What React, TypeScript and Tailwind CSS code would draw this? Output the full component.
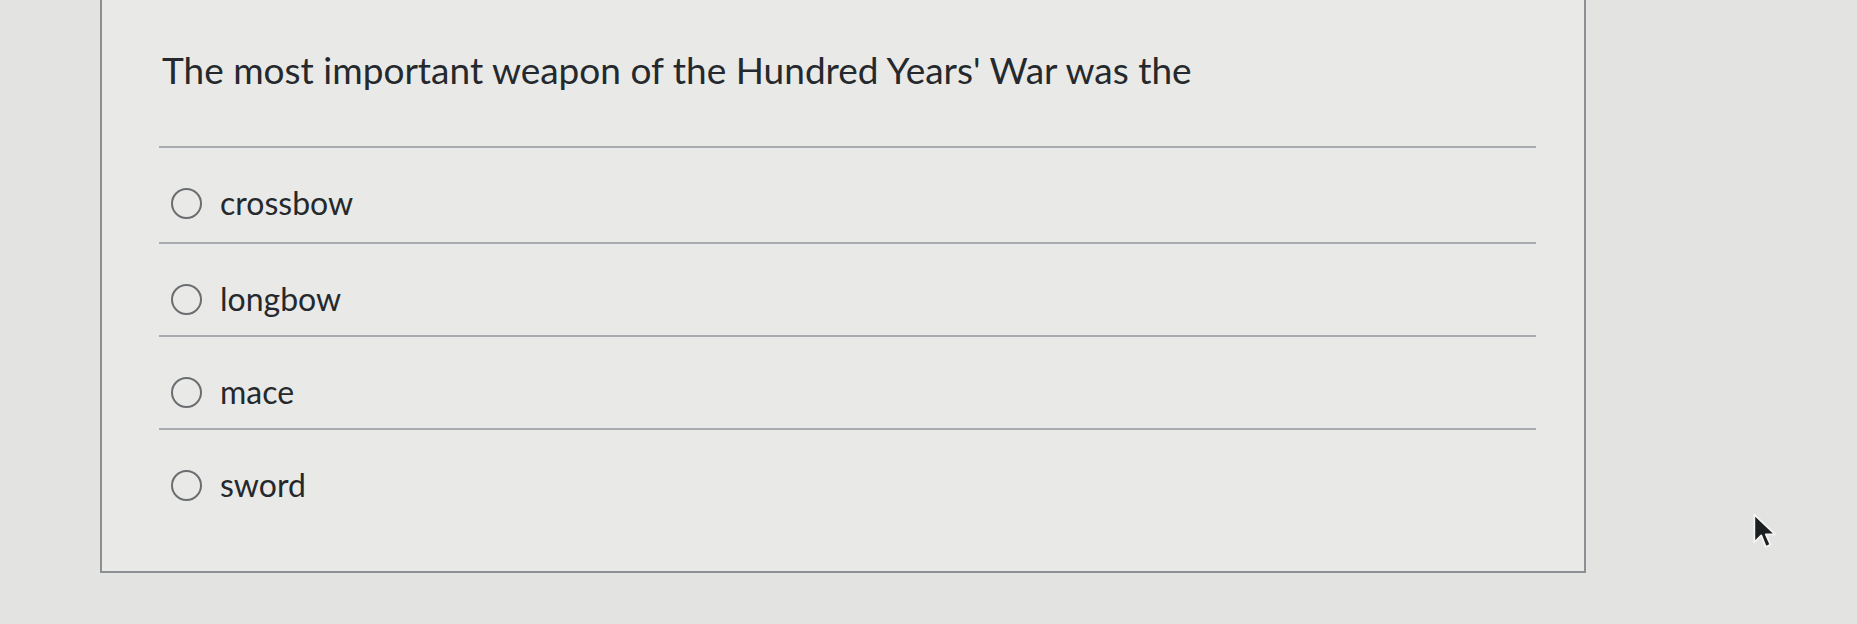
const OPTIONS = ['crossbow', 'longbow', 'mace', 'sword'];

function Radio() {
  return <span className="block h-[31px] w-[31px] shrink-0 rounded-full border-2 border-[#6a6e71]" />;
}

function Cursor() {
  return (
    <svg
      className="absolute left-[1752px] top-[512px]"
      width="30"
      height="40"
      viewBox="0 0 26 34"
    >
      <path
        d="M2 2 L2 26 L8 20 L12 30 L16 28 L12 19 L20 19 Z"
        fill="#1c1f22"
        stroke="#f4f4f4"
        strokeWidth="1.6"
        strokeLinejoin="round"
      />
    </svg>
  );
}

export default function App() {
  return (
    <div
      className="relative h-[624px] w-[1857px] overflow-hidden bg-[#e3e3e1]"
      style={{ fontFamily: 'Lato, "Open Sans", sans-serif' }}
    >
      <div className="ml-[100px] h-[573px] w-[1486px] border-x-2 border-b-2 border-[#8c9093] bg-[#e9e9e7] pl-[57px] pr-[48px]">
        <h1 className="pt-[50px] pl-[3px] text-[37px] leading-[40px] font-normal text-[#25292d]">
          The most important weapon of the Hundred Years' War was the
        </h1>

        <div className="mt-[56px]">
          {OPTIONS.map((opt, i) => (
            <div key={opt}>
              <div className="h-[2px] bg-[#a7abad]" />
              <label
                className={`flex items-center gap-[18px] pl-[12px] ${
                  i === 0 ? 'pt-[38px] pb-[22px]' : 'pt-[38px] pb-[19px]'
                }`}
              >
                <Radio />
                <span className="text-[32px] leading-[34px] text-[#25292d]">{opt}</span>
              </label>
            </div>
          ))}
        </div>
      </div>

      <Cursor />
    </div>
  );
}
